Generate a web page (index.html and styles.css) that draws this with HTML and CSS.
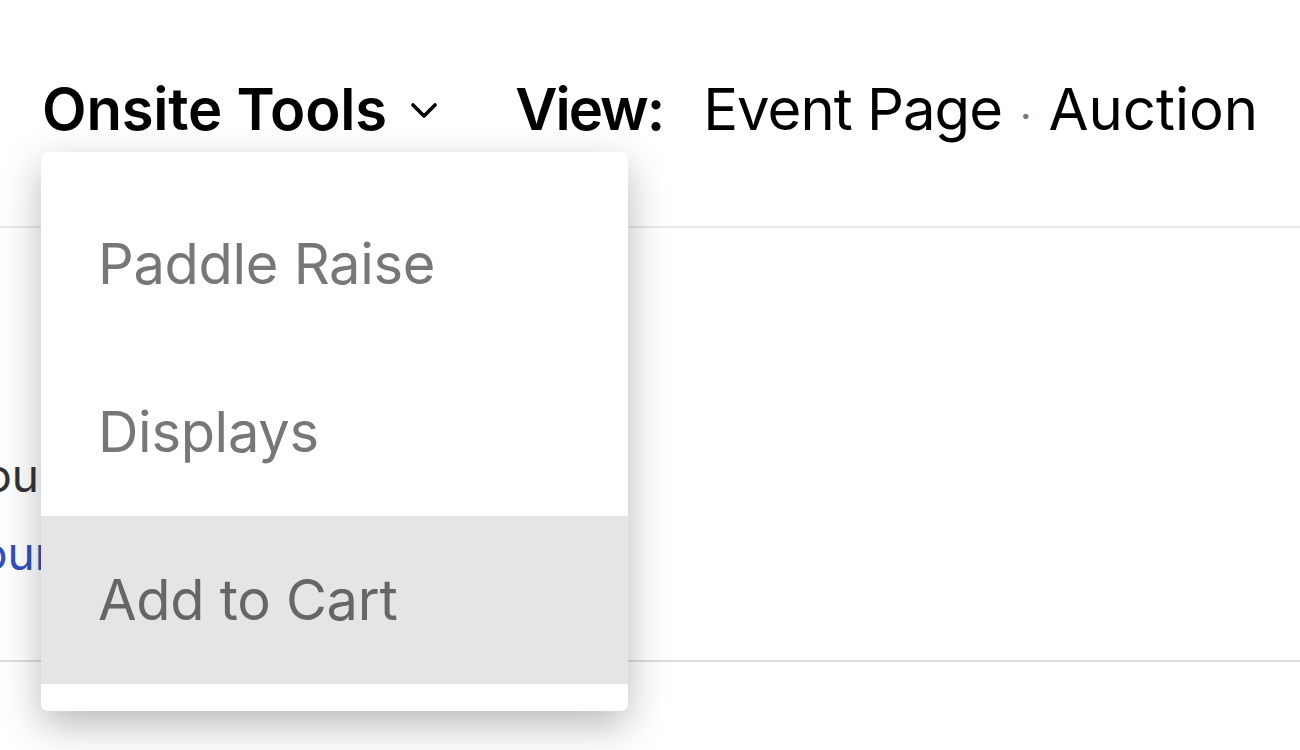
FILE: index.html
```html
<!DOCTYPE html>
<html>
<head>
<meta charset="utf-8">
<link rel="stylesheet" href="styles.css">
</head>
<body>
<div class="page">
  <header class="topbar">
    <div class="tools">
      <span class="tools-label">Onsite Tools</span>
      <svg class="chev" width="26" height="16" viewBox="0 0 26 16"><path d="M2 2 L13 13 L24 2" fill="none" stroke="#000" stroke-width="3.6" stroke-linecap="round" stroke-linejoin="round"/></svg>
    </div>
    <div class="view">
      <span class="view-label">View:</span>
      <span class="view-link">Event Page</span>
      <span class="sep">·</span>
      <span class="view-link auction">Auction</span>
    </div>
  </header>
  <section class="content">
    <div class="row row-dark"><span>Do you</span></div>
    <div class="row row-blue"><span>Your</span></div>
  </section>
  <div class="menu">
    <div class="item">Paddle Raise</div>
    <div class="item">Displays</div>
    <div class="item active">Add to Cart</div>
  </div>
</div>
</body>
</html>
```

FILE: styles.css
```css
html, body {
  margin: 0;
  padding: 0;
  background: #fff;
  overflow: hidden;
}
body {
  font-family: "Inter", "Liberation Sans", sans-serif;
  width: 1300px;
  height: 750px;
}
.page {
  position: relative;
  width: 1300px;
  height: 750px;
}
.topbar {
  display: flex;
  justify-content: space-between;
  align-items: center;
  height: 228px;
  padding: 0 42px 8px 42px;
  box-sizing: border-box;
  border-bottom: 2px solid #e9e9e9;
}
.tools {
  display: flex;
  align-items: center;
  gap: 24px;
}
.tools-label {
  font-size: 58px;
  font-weight: 600;
  letter-spacing: -0.2px;
  color: #000;
}
.chev {
  margin-top: 4px;
}
.view {
  display: flex;
  align-items: baseline;
  font-size: 58px;
  color: #000;
  letter-spacing: -1px;
}
.view-label {
  font-weight: 600;
  letter-spacing: -2px;
  margin-right: 40px;
}
.auction {
  letter-spacing: 0;
}
.sep {
  color: #777;
  font-size: 40px;
  margin: 0 18px;
}
.content {
  height: 434px;
  border-bottom: 2px solid #dedede;
  box-sizing: border-box;
  padding-top: 217px;
  font-size: 46px;
  overflow: hidden;
}
.row {
  display: flex;
  justify-content: flex-end;
  white-space: nowrap;
  line-height: 60px;
}
.row-dark {
  width: 39px;
  color: #333;
}
.row-blue {
  width: 52px;
  color: #2f4fc4;
  margin-top: 18px;
}
.menu {
  position: absolute;
  left: 41px;
  top: 152px;
  width: 587px;
  height: 559px;
  box-sizing: border-box;
  padding: 28px 0 27px;
  background: #fff;
  border-radius: 7px;
  box-shadow: 0 14px 40px rgba(0, 0, 0, 0.28);
  display: flex;
  flex-direction: column;
}
.item {
  height: 168px;
  display: flex;
  align-items: center;
  padding-left: 57px;
  font-size: 56px;
  color: #777;
  letter-spacing: -0.3px;
}
.item.active {
  background: #e5e5e5;
  color: #666;
}
```
